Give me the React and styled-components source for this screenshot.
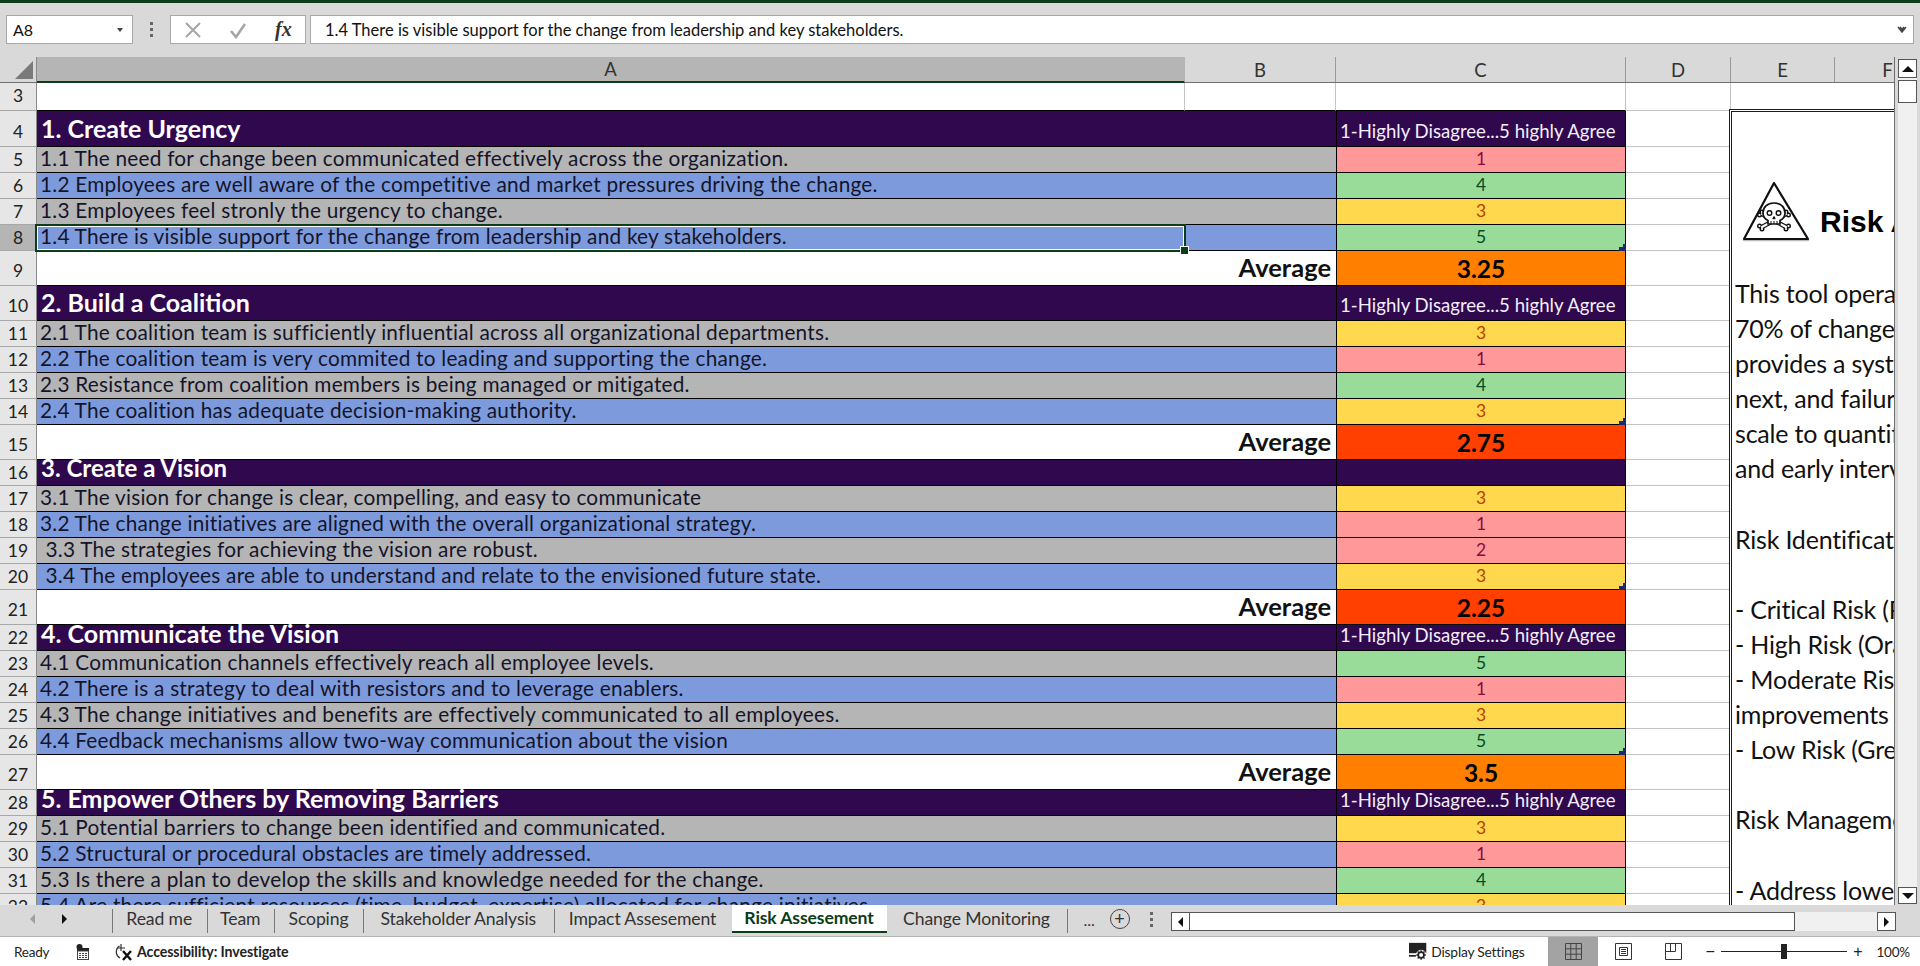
import React from 'react';
import styled, { createGlobalStyle } from 'styled-components';

const GlobalStyle = createGlobalStyle`
  html, body { margin: 0; height: 100%; overflow: hidden; background: #d9d9d9; }
  * { box-sizing: border-box; }
`;

const COLUMNS = '37px 1148px 151px 290px 105px 104px 106px';
const GREEN = '#0c3c18';
const PURPLE = '#30084e';
const FONT = 'Lato, "Liberation Sans", sans-serif';

const Page = styled.div`
  width: 1920px;
  height: 966px;
  display: flex;
  flex-direction: column;
  font-family: ${FONT};
  color: #111;
  overflow: hidden;
`;

const TitleStrip = styled.div`
  height: 3px;
  background: ${GREEN};
`;

const FormulaBar = styled.div`
  height: 54px;
  padding: 12px 6px 13px 6px;
  display: flex;
  align-items: stretch;
  background: #d9d9d9;
`;

const NameBox = styled.div`
  width: 127px;
  background: #fff;
  border: 1px solid #a8a8a8;
  display: flex;
  align-items: center;
  justify-content: space-between;
  padding: 0 9px 0 6px;
  font-size: 16px;
`;

const Caret = styled.span`
  width: 0;
  height: 0;
  border-left: 3.5px solid transparent;
  border-right: 3.5px solid transparent;
  border-top: 4px solid ${p => p.$color || '#444'};
`;

const GripDots = styled.div`
  width: 37px;
  display: flex;
  flex-direction: column;
  align-items: center;
  justify-content: center;
  gap: 3px;
  span { width: 3px; height: 3px; background: #666; }
`;

const FxBox = styled.div`
  width: 136px;
  background: #fff;
  border: 1px solid #a8a8a8;
  display: flex;
  align-items: center;
  padding: 0 0 0 13px;
  gap: 27px;
`;

const FxLabel = styled.span`
  font-family: "Liberation Serif", serif;
  font-style: italic;
  font-weight: 700;
  font-size: 20px;
  color: #333;
  margin-left: 1px;
`;

const FormulaInput = styled.div`
  flex: 1;
  margin-left: 4px;
  background: #fff;
  border: 1px solid #a8a8a8;
  display: flex;
  align-items: center;
  justify-content: space-between;
  padding: 0 6px 0 14px;
  font-size: 16.5px;
`;

const Workspace = styled.div`
  height: 848px;
  display: flex;
  background: #d9d9d9;
`;

const Sheet = styled.div`
  width: 1895px;
  flex: none;
  overflow: hidden;
  position: relative;
  border-right: 1px solid #707070;
`;

const ColumnHeader = styled.div`
  height: 26px;
  display: grid;
  grid-template-columns: ${COLUMNS};
  border-bottom: 1px solid #707070;
`;

const Corner = styled.div`
  border-right: 1px solid #8a8a8a;
  position: relative;
  &::after {
    content: '';
    position: absolute;
    right: 3px;
    bottom: 3px;
    border-style: solid;
    border-width: 0 0 18px 18px;
    border-color: transparent transparent #7a7a7a transparent;
  }
`;

const ColumnLabel = styled.div`
  display: flex;
  align-items: center;
  justify-content: center;
  font-size: 18.5px;
  color: #333;
  background: ${p => (p.$active ? '#b5b5b5' : 'transparent')};
  border-right: 1px solid ${p => (p.$active ? 'transparent' : '#9a9a9a')};
  border-bottom: ${p => (p.$active ? `2px solid ${GREEN}` : 'none')};
  margin-bottom: ${p => (p.$active ? '-1px' : '0')};
`;

const RowsArea = styled.div`
  position: relative;
  height: 822px;
  overflow: hidden;
  background: #fff;
`;

const Row = styled.div`
  position: relative;
  display: grid;
  grid-template-columns: ${COLUMNS};
  height: ${p => p.$h}px;
`;

const RowHead = styled.div`
  background: ${p => (p.$active ? '#b5b5b5' : '#e6e6e6')};
  border-right: 1px solid #8a8a8a;
  border-bottom: 1px solid #a8a8a8;
  display: flex;
  align-items: flex-end;
  justify-content: center;
  font-size: 17.5px;
  color: #222;
  padding-bottom: ${p => (p.$tall ? 4 : 2)}px;
`;

const toneColors = { gray: '#b5b5b5', blue: '#7d9bdc', purple: PURPLE, white: '#fff' };

const LabelCell = styled.div`
  grid-column: span 2;
  background: ${p => toneColors[p.$tone]};
  border-bottom: 1px solid #000;
  display: flex;
  align-items: flex-end;
  justify-content: ${p => (p.$right ? 'flex-end' : 'flex-start')};
  padding: 0 5px 3px 3px;
  white-space: pre;
  font-size: 20.8px;
  letter-spacing: 0.22px;
  line-height: 22px;
  color: #14142a;
`;

const SectionTitle = styled.span`
  font-weight: 700;
  font-size: ${p => p.$size || 25}px;
  letter-spacing: 0;
  line-height: ${p => (p.$tight ? '16px' : '30px')};
  align-self: ${p => (p.$tight ? 'flex-start' : 'flex-end')};
  color: #fff;
  margin-left: 1px;
`;

const AverageLabel = styled.span`
  font-weight: 700;
  font-size: 25.5px;
  letter-spacing: 0;
  line-height: 30px;
  color: #111;
`;

const scoreStyles = {
  1: { bg: '#ff9999', fg: '#8c0a3c' },
  2: { bg: '#ff9999', fg: '#8c0a3c' },
  3: { bg: '#ffd84d', fg: '#b84200' },
  4: { bg: '#99dc99', fg: '#064a26' },
  5: { bg: '#99dc99', fg: '#064a26' },
};

const ScoreCell = styled.div`
  position: relative;
  background: ${p => scoreStyles[p.$score].bg};
  color: ${p => scoreStyles[p.$score].fg};
  border-left: 1px solid #000;
  border-right: 1px solid #000;
  border-bottom: 1px solid #000;
  display: flex;
  align-items: center;
  justify-content: center;
  padding-bottom: 2px;
  font-size: 17.5px;
`;

const ScaleCell = styled.div`
  background: ${PURPLE};
  color: #f2eefa;
  border-left: 1px solid #000;
  border-right: 1px solid #000;
  border-bottom: 1px solid #000;
  display: flex;
  align-items: flex-end;
  padding: 0 0 4px 3px;
  font-size: 18.6px;
  line-height: 21px;
  white-space: nowrap;
`;

const AverageCell = styled.div`
  background: ${p => p.$bg};
  border-left: 1px solid #000;
  border-right: 1px solid #000;
  border-bottom: 1px solid #000;
  display: flex;
  align-items: center;
  justify-content: center;
  font-weight: 700;
  font-size: 24.5px;
  color: #000;
`;

const BlankCell = styled.div`
  background: #fff;
  border-right: ${p => (p.$line ? '1px solid #c4c4c4' : 'none')};
  border-bottom: 1px solid ${p => (p.$dark ? '#000' : '#c4c4c4')};
`;

const CornerMark = styled.svg`
  position: absolute;
  right: -1px;
  bottom: -1px;
  display: block;
`;

const Selection = styled.div`
  position: absolute;
  z-index: 3;
  left: 35px;
  top: -1px;
  width: 1151px;
  height: 28px;
  border: 2px solid ${GREEN};
  outline: 1px solid #fff;
  outline-offset: -3px;
  pointer-events: none;
  &::after {
    content: '';
    position: absolute;
    right: -5px;
    bottom: -5px;
    width: 7px;
    height: 7px;
    background: ${GREEN};
    border: 1px solid #fff;
  }
`;

const NoteBox = styled.div`
  position: absolute;
  left: 1729px;
  top: 26px;
  width: 260px;
  height: 900px;
  background: #fff;
  border: 3px double ${PURPLE};
  padding: 0 0 0 3px;
  overflow: hidden;
`;

const NoteHeading = styled.div`
  height: 164px;
  padding: 64px 0 0 3px;
  display: flex;
  align-items: flex-start;
  white-space: nowrap;
`;

const NoteTitle = styled.span`
  font-family: "Liberation Sans", sans-serif;
  font-weight: 700;
  font-size: 30px;
  color: #000;
  margin: 29px 0 0 6px;
`;

const NoteLine = styled.div`
  height: 35.1px;
  line-height: 35px;
  font-size: 25px;
  letter-spacing: -0.2px;
  color: #111;
  white-space: pre;
`;

const VScroll = styled.div`
  flex: 1;
  padding: 2px 3px 1px 3px;
  display: flex;
  flex-direction: column;
`;

const ScrollButton = styled.div`
  width: ${p => p.$w || 19}px;
  height: ${p => p.$h || 19}px;
  flex: none;
  background: #fff;
  border: 1px solid #555;
  display: flex;
  align-items: center;
  justify-content: center;
`;

const VTrack = styled.div`
  flex: 1;
  background: #f0f0f0;
  padding-top: 2px;
`;

const VThumb = styled.div`
  height: 23px;
  background: #fff;
  border: 1px solid #555;
`;

const Arrow = styled.span`
  width: 0;
  height: 0;
  border-style: solid;
  border-color: transparent;
  ${p => p.$dir === 'up' && 'border-width: 0 6px 6px 6px; border-bottom-color: #111;'}
  ${p => p.$dir === 'down' && 'border-width: 6px 6px 0 6px; border-top-color: #111;'}
  ${p => p.$dir === 'left' && `border-width: 5px 5px 5px 0; border-right-color: ${p.$color || '#111'};`}
  ${p => p.$dir === 'right' && `border-width: 5px 0 5px 5px; border-left-color: ${p.$color || '#111'};`}
`;

const TabBar = styled.div`
  height: 32px;
  display: flex;
  align-items: flex-start;
  background: #d9d9d9;
  border-bottom: 1px solid #b4b4b4;
`;

const TabNav = styled.div`
  width: 112px;
  height: 28px;
  flex: none;
  display: flex;
  align-items: center;
  gap: 27px;
  padding-left: 30px;
`;

const Tab = styled.div`
  width: ${p => p.$w}px;
  height: 28px;
  flex: none;
  display: flex;
  align-items: center;
  justify-content: center;
  font-size: 17.6px;
  letter-spacing: -0.12px;
  padding-bottom: 1px;
  color: ${p => (p.$active ? GREEN : '#333')};
  font-weight: ${p => (p.$active ? 700 : 400)};
  background: ${p => (p.$active ? '#fff' : 'transparent')};
  border-bottom: ${p => (p.$active ? `2px solid ${GREEN}` : 'none')};
  position: relative;
  &::before {
    content: '';
    display: ${p => (p.$sep ? 'block' : 'none')};
    position: absolute;
    left: 0;
    top: 4px;
    bottom: 0;
    width: 1px;
    background: #777;
  }
`;

const TabEnd = styled.div`
  width: 1px;
  height: 24px;
  margin-top: 4px;
  flex: none;
  background: #777;
`;

const TabTools = styled.div`
  width: 103px;
  height: 28px;
  flex: none;
  display: flex;
  align-items: center;
  padding-left: 16px;
  color: #333;
`;

const Ellipsis = styled.span`
  font-size: 16px;
  width: 26px;
`;

const AddSheet = styled.span`
  width: 20px;
  height: 20px;
  margin-right: 3px;
  border: 1.5px solid #444;
  border-radius: 50%;
  display: flex;
  align-items: center;
  justify-content: center;
  font-size: 18px;
  line-height: 1;
  font-family: "Liberation Sans", sans-serif;
`;

const HScroll = styled.div`
  width: 725px;
  height: 19px;
  margin-top: 7px;
  flex: none;
  display: flex;
  background: #f0f0f0;
`;

const HThumb = styled.div`
  width: 605px;
  background: #fff;
  border: 1px solid #555;
  border-left: none;
`;

const HSpacer = styled.div`
  flex: 1;
`;

const StatusBar = styled.div`
  flex: 1;
  display: flex;
  align-items: center;
  background: #fff;
  font-size: 13.5px;
  color: #222;
  letter-spacing: -0.2px;
`;

const ReadyLabel = styled.span`
  margin-left: 14px;
  width: 62px;
`;

const AccessLabel = styled.span`
  font-weight: 700;
  margin-left: 3px;
  font-size: 14.2px;
  letter-spacing: -0.12px;
`;

const StatusRight = styled.div`
  margin-left: auto;
  height: 100%;
  display: flex;
  align-items: center;
`;

const DisplayLabel = styled.span`
  margin: 0 24px 0 3px;
  font-size: 13.8px;
  letter-spacing: -0.2px;
`;

const ViewButton = styled.div`
  width: 50px;
  height: 100%;
  display: flex;
  align-items: center;
  justify-content: center;
  background: ${p => (p.$active ? '#a3a3a3' : 'transparent')};
`;

const ZoomSlider = styled.div`
  width: 157px;
  margin-left: 7px;
  display: flex;
  align-items: center;
  gap: 6px;
  font-family: "Liberation Sans", sans-serif;
  font-size: 16px;
`;

const ZoomTrack = styled.div`
  flex: 1;
  height: 1px;
  background: #222;
  position: relative;
`;

const ZoomThumb = styled.span`
  position: absolute;
  left: 60px;
  top: -7px;
  width: 6px;
  height: 15px;
  background: #222;
`;

const ZoomValue = styled.span`
  margin: 0 10px 0 14px;
  font-size: 13.5px;
`;

const Icon = styled.svg`
  display: block;
  flex: none;
`;

const AccessIconFrame = styled(Icon)`
  margin-left: 24px;
`;

const sections = [
  {
    title: '1. Create Urgency',
    height: 36,
    scale: true,
    average: '3.25',
    averageBg: '#ff8000',
    items: [
      ['1.1 The need for change been communicated effectively across the organization.', 1],
      ['1.2 Employees are well aware of the competitive and market pressures driving the change.', 4],
      ['1.3 Employees feel stronly the urgency to change.', 3],
      ['1.4 There is visible support for the change from leadership and key stakeholders.', 5],
    ],
  },
  {
    title: '2. Build a Coalition',
    height: 35,
    scale: true,
    average: '2.75',
    averageBg: '#ff4000',
    items: [
      ['2.1 The coalition team is sufficiently influential across all organizational departments.', 3],
      ['2.2 The coalition team is very commited to leading and supporting the change.', 1],
      ['2.3 Resistance from coalition members is being managed or mitigated.', 4],
      ['2.4 The coalition has adequate decision-making authority.', 3],
    ],
  },
  {
    title: '3. Create a Vision',
    titleSize: 24,
    height: 26,
    scale: false,
    average: '2.25',
    averageBg: '#ff4000',
    items: [
      ['3.1 The vision for change is clear, compelling, and easy to communicate', 3],
      ['3.2 The change initiatives are aligned with the overall organizational strategy.', 1],
      [' 3.3 The strategies for achieving the vision are robust.', 2],
      [' 3.4 The employees are able to understand and relate to the envisioned future state.', 3],
    ],
  },
  {
    title: '4. Communicate the Vision',
    height: 26,
    scale: true,
    average: '3.5',
    averageBg: '#ff8000',
    items: [
      ['4.1 Communication channels effectively reach all employee levels.', 5],
      ['4.2 There is a strategy to deal with resistors and to leverage enablers.', 1],
      ['4.3 The change initiatives and benefits are effectively communicated to all employees.', 3],
      ['4.4 Feedback mechanisms allow two-way communication about the vision', 5],
    ],
  },
  {
    title: '5. Empower Others by Removing Barriers',
    height: 26,
    scale: true,
    items: [
      ['5.1 Potential barriers to change been identified and communicated.', 3],
      ['5.2 Structural or procedural obstacles are timely addressed.', 1],
      ['5.3 Is there a plan to develop the skills and knowledge needed for the change.', 4],
      ['5.4 Are there sufficient resources (time, budget, expertise) allocated for change initiatives', 3],
    ],
  },
];

const noteLines = [
  'This tool operates on',
  '70% of change initiatives',
  'provides a systematic',
  'next, and failure to',
  'scale to quantify',
  'and early intervention',
  ' ',
  'Risk Identification',
  ' ',
  '- Critical Risk (Red)',
  '- High Risk (Orange)',
  '- Moderate Risk',
  'improvements',
  '- Low Risk (Green)',
  ' ',
  'Risk Management',
  ' ',
  '- Address lowest',
];

const EmptyTail = () => (
  <>
    <BlankCell $line />
    <BlankCell />
    <BlankCell />
  </>
);

const HazardIcon = () => (
  <Icon width="76" height="70" viewBox="0 0 76 70">
    <path d="M36 7 L70 63 H6 Z" transform="translate(0 1)" fill="none" stroke="#bbb" strokeWidth="2.4" strokeLinejoin="round" />
    <path d="M36 7 L70 63 H6 Z" fill="#fff" stroke="#111" strokeWidth="2.2" strokeLinejoin="round" />
    <g strokeLinecap="round">
      <path d="M24 38 L48 51 M48 38 L24 51" stroke="#111" strokeWidth="4.6" />
      <path d="M24 36 v0 M21.500 39 v0 M48 36 v0 M50.500 39 v0 M24 53 v0 M21.500 50 v0 M48 53 v0 M50.500 50 v0" stroke="#111" strokeWidth="5" />
      <path d="M24 36 v0 M21.500 39 v0 M48 36 v0 M50.500 39 v0 M24 53 v0 M21.500 50 v0 M48 53 v0 M50.500 50 v0" stroke="#fff" strokeWidth="2.2" />
      <path d="M24 38 L48 51 M48 38 L24 51" stroke="#fff" strokeWidth="2" />
    </g>
    <path d="M36 27 c-7 0 -11 4.500 -11 10 c0 4 2 6 5 7.500 v3.500 h12 v-3.500 c3 -1.500 5 -3.500 5 -7.500 c0 -5.500 -4 -10 -11 -10 z" fill="#fff" stroke="#111" strokeWidth="1.7" />
    <circle cx="31.500" cy="37" r="2.300" fill="none" stroke="#111" strokeWidth="1.400" />
    <circle cx="40.500" cy="37" r="2.300" fill="none" stroke="#111" strokeWidth="1.400" />
    <path d="M36 40.500 l-1.200 2.200 h2.400 z M33 45 v3 M36 45 v3 M39 45 v3" fill="#111" stroke="#111" strokeWidth="1" />
  </Icon>
);

const MacroIcon = () => (
  <Icon width="14" height="16" viewBox="0 0 14 16">
    <circle cx="3.500" cy="3" r="3" fill="#222" />
    <rect x="1" y="4" width="12" height="3" fill="#222" />
    <rect x="1.500" y="7" width="11" height="8.500" fill="#fff" stroke="#444" />
    <path d="M3 9.500h2M6 9.500h2M9 9.500h2M3 11.500h2M6 11.500h2M9 11.500h2M3 13.500h2M6 13.500h2M9 13.500h2" stroke="#444" />
  </Icon>
);

const AccessIcon = () => (
  <AccessIconFrame width="20" height="18" viewBox="0 0 20 18">
    <path d="M7 1 v7 M4 5 H11" stroke="#333" strokeWidth="1.200" fill="none" />
    <path d="M5.500 3 A7 7 0 0 0 6 15" stroke="#333" strokeWidth="1.300" fill="none" />
    <path d="M9 8 L17 17 M17 8 L9 17" stroke="#111" strokeWidth="2.400" fill="none" />
  </AccessIconFrame>
);

const DisplayIcon = () => (
  <Icon width="19" height="19" viewBox="0 0 22 22">
    <rect x="0" y="1" width="20" height="12" fill="#222" />
    <path d="M0 16 h8" stroke="#222" strokeWidth="2" />
    <circle cx="14" cy="15" r="6" fill="#fff" />
    <circle cx="14" cy="15" r="3.300" fill="none" stroke="#222" strokeWidth="2" />
    <path d="M14 9.500 v2 M14 18.500 v2 M8.500 15 h2 M17.500 15 h2 M10 11 l1.500 1.500 M18 11 l-1.500 1.500 M10 19 l1.500 -1.500 M18 19 l-1.500 -1.500" stroke="#222" strokeWidth="1.600" />
  </Icon>
);

const App = () => {
  let rowNumber = 4;
  const rows = [];

  sections.forEach(section => {
    rows.push(
      <Row key={rowNumber} $h={section.height}>
        <RowHead $tall={section.height > 30}>{rowNumber}</RowHead>
        <LabelCell $tone="purple">
          <SectionTitle $tight={section.height < 30} $size={section.titleSize}>{section.title}</SectionTitle>
        </LabelCell>
        {section.scale ? <ScaleCell>1-Highly Disagree...5 highly Agree</ScaleCell> : <ScaleCell />}
        <EmptyTail />
      </Row>,
    );
    rowNumber += 1;

    section.items.forEach(([text, score], i) => {
      const selected = rowNumber === 8;
      rows.push(
        <Row key={rowNumber} $h={26}>
          <RowHead $active={selected}>{rowNumber}</RowHead>
          <LabelCell $tone={i % 2 === 0 ? 'gray' : 'blue'}>{text}</LabelCell>
          <ScoreCell $score={score}>
            {score}
            {i === 3 && section.average && (
              <CornerMark width="7" height="7" viewBox="0 0 7 7">
                <path d="M7 0 H4 V3 H0 V7 H7 Z" fill="#1c2a6a" />
              </CornerMark>
            )}
          </ScoreCell>
          <EmptyTail />
          {selected && <Selection />}
        </Row>,
      );
      rowNumber += 1;
    });

    if (section.average) {
      rows.push(
        <Row key={rowNumber} $h={35}>
          <RowHead $tall>{rowNumber}</RowHead>
          <LabelCell $tone="white" $right>
            <AverageLabel>Average</AverageLabel>
          </LabelCell>
          <AverageCell $bg={section.averageBg}>{section.average}</AverageCell>
          <EmptyTail />
        </Row>,
      );
      rowNumber += 1;
    }
  });

  return (
    <Page>
      <GlobalStyle />
      <TitleStrip />
      <FormulaBar>
        <NameBox>
          A8
          <Caret />
        </NameBox>
        <GripDots>
          <span />
          <span />
          <span />
        </GripDots>
        <FxBox>
          <Icon width="18" height="18" viewBox="0 0 18 18">
            <path d="M2 2 L16 16 M16 2 L2 16" stroke="#a6a6a6" strokeWidth="2" />
          </Icon>
          <Icon width="18" height="18" viewBox="0 0 18 18">
            <path d="M2 10 L7 16 L16 3" stroke="#a6a6a6" strokeWidth="2.600" fill="none" />
          </Icon>
          <FxLabel>fx</FxLabel>
        </FxBox>
        <FormulaInput>
          1.4 There is visible support for the change from leadership and key stakeholders.
          <Icon width="10" height="8" viewBox="0 0 10 8">
            <path d="M1 1 L5 6 L9 1 M3 1 L5 3.500 L7 1" stroke="#444" strokeWidth="1.500" fill="none" />
          </Icon>
        </FormulaInput>
      </FormulaBar>

      <Workspace>
        <Sheet>
          <ColumnHeader>
            <Corner />
            <ColumnLabel $active>A</ColumnLabel>
            <ColumnLabel>B</ColumnLabel>
            <ColumnLabel>C</ColumnLabel>
            <ColumnLabel>D</ColumnLabel>
            <ColumnLabel>E</ColumnLabel>
            <ColumnLabel>F</ColumnLabel>
          </ColumnHeader>
          <RowsArea>
            <Row $h={28}>
              <RowHead $tall>3</RowHead>
              <BlankCell $line $dark />
              <BlankCell $line $dark />
              <BlankCell $line $dark />
              <EmptyTail />
            </Row>
            {rows}
            <NoteBox>
              <NoteHeading>
                <HazardIcon />
                <NoteTitle>Risk Assessment</NoteTitle>
              </NoteHeading>
              {noteLines.map((line, i) => (
                <NoteLine key={i}>{line}</NoteLine>
              ))}
            </NoteBox>
          </RowsArea>
        </Sheet>
        <VScroll>
          <ScrollButton>
            <Arrow $dir="up" />
          </ScrollButton>
          <VTrack>
            <VThumb />
          </VTrack>
          <ScrollButton $h={17}>
            <Arrow $dir="down" />
          </ScrollButton>
        </VScroll>
      </Workspace>

      <TabBar>
        <TabNav>
          <Arrow $dir="left" $color="#a0a0a0" />
          <Arrow $dir="right" />
        </TabNav>
        <Tab $w={94.5} $sep>Read me</Tab>
        <Tab $w={67.5} $sep>Team</Tab>
        <Tab $w={89} $sep>Scoping</Tab>
        <Tab $w={190.5} $sep>Stakeholder Analysis</Tab>
        <Tab $w={178} $sep>Impact Assesement</Tab>
        <Tab $w={155} $active>Risk Assesement</Tab>
        <Tab $w={180}>Change Monitoring</Tab>
        <TabEnd />
        <TabTools>
          <Ellipsis>...</Ellipsis>
          <AddSheet>+</AddSheet>
          <GripDots>
            <span />
            <span />
            <span />
          </GripDots>
        </TabTools>
        <HScroll>
          <ScrollButton>
            <Arrow $dir="left" />
          </ScrollButton>
          <HThumb />
          <HSpacer />
          <ScrollButton>
            <Arrow $dir="right" />
          </ScrollButton>
        </HScroll>
      </TabBar>

      <StatusBar>
        <ReadyLabel>Ready</ReadyLabel>
        <MacroIcon />
        <AccessIcon />
        <AccessLabel>Accessibility: Investigate</AccessLabel>
        <StatusRight>
          <DisplayIcon />
          <DisplayLabel>Display Settings</DisplayLabel>
          <ViewButton $active>
            <Icon width="17" height="17" viewBox="0 0 17 17">
              <path d="M.5 .5h16v16h-16z M.5 5.800h16 M.5 11.200h16 M5.800 .5v16 M11.200 .5v16" fill="none" stroke="#444" />
            </Icon>
          </ViewButton>
          <ViewButton>
            <Icon width="17" height="17" viewBox="0 0 17 17">
              <path d="M.5 .5h16v16h-16z M4.500 4.500h8v8h-8z M6 6.500h5 M6 8.500h5 M6 10.500h5" fill="none" stroke="#333" />
            </Icon>
          </ViewButton>
          <ViewButton>
            <Icon width="17" height="17" viewBox="0 0 17 17">
              <path d="M.5 .5h16v16h-16z M.5 8.500h10 M10.500 .5v8 M5.500 .5v8" fill="none" stroke="#333" />
            </Icon>
          </ViewButton>
          <ZoomSlider>
            −
            <ZoomTrack>
              <ZoomThumb />
            </ZoomTrack>
            +
          </ZoomSlider>
          <ZoomValue>100%</ZoomValue>
        </StatusRight>
      </StatusBar>
    </Page>
  );
};

export default App;
